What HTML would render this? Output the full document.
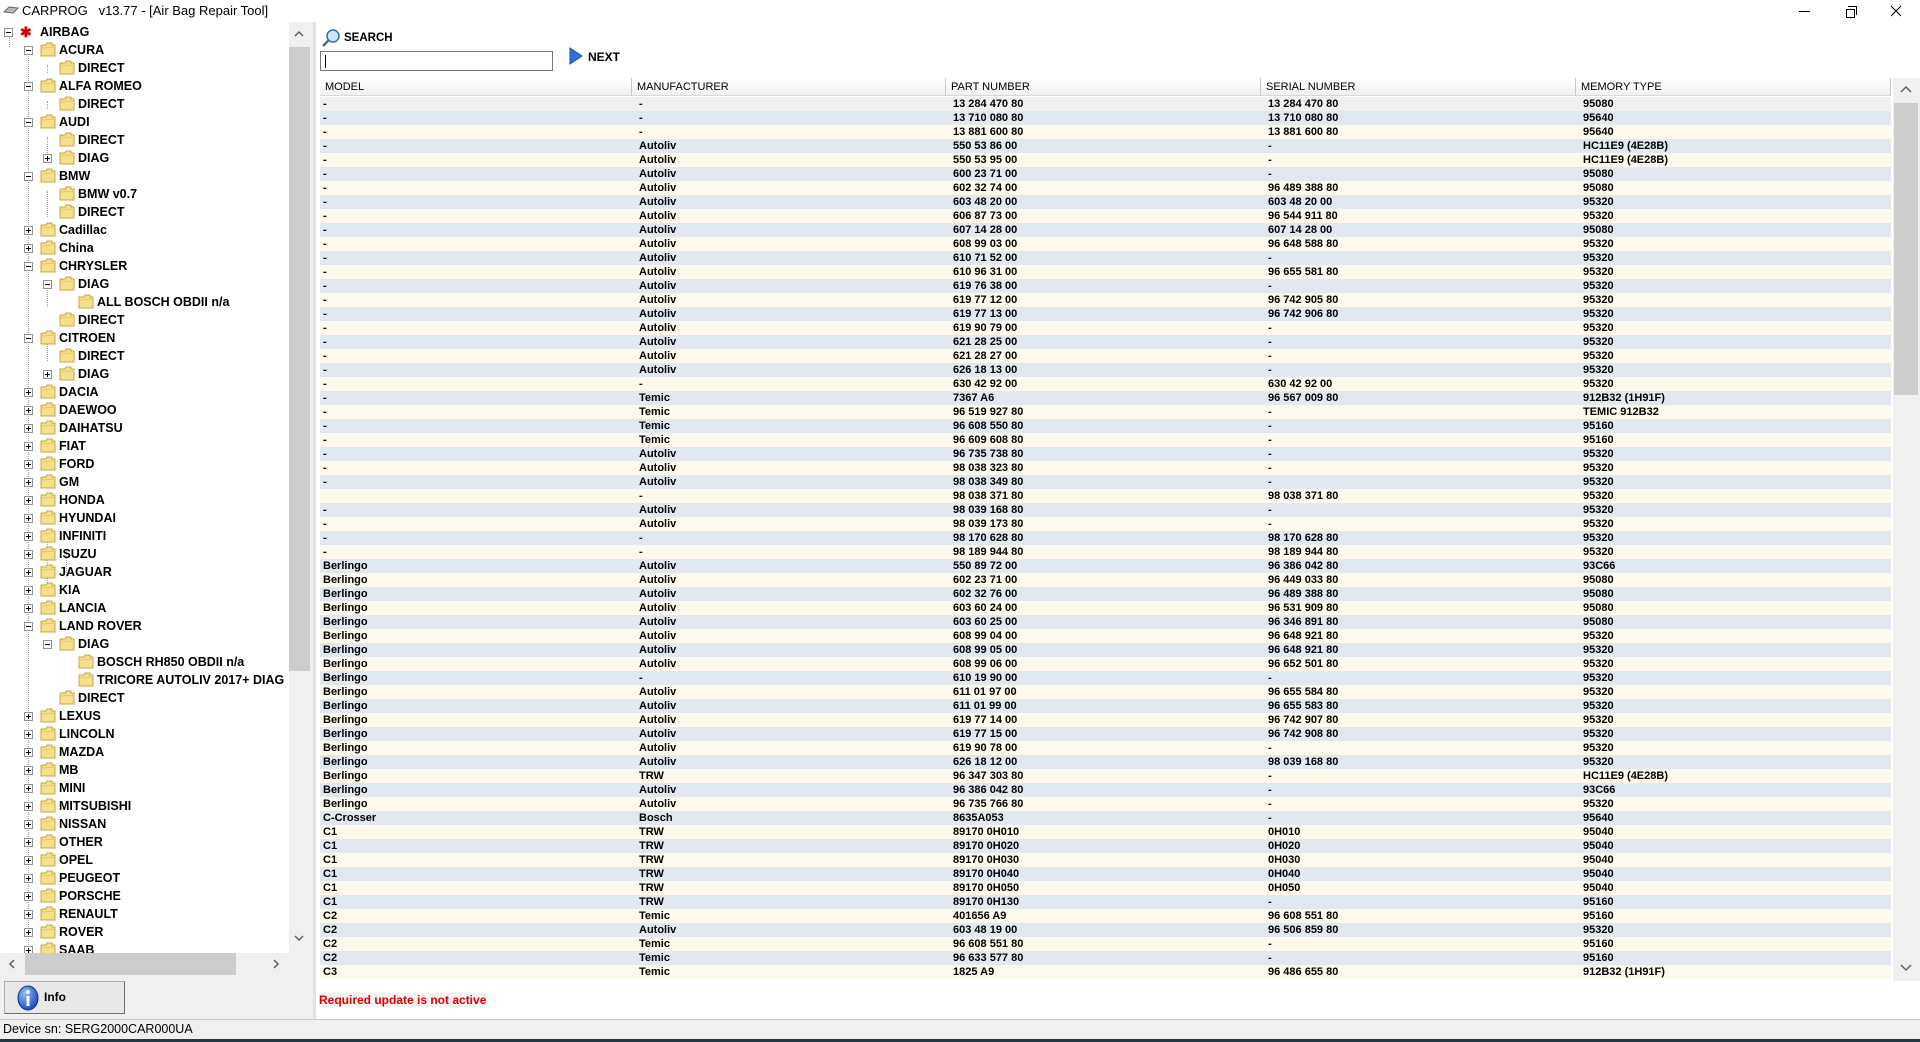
<!DOCTYPE html>
<html><head><meta charset="utf-8"><style>
*{margin:0;padding:0;box-sizing:border-box}
body{width:1920px;height:1042px;overflow:hidden;background:#f0f0f0;font-family:"Liberation Sans",Tahoma,sans-serif;position:relative;color:#000}
.abs{position:absolute}
#title{left:0;top:0;width:1920px;height:22px;background:#fff;font-size:13px}
#tree{left:0;top:22px;width:289px;height:931px;background:#fff;overflow:hidden}
.tr{position:absolute;height:18px;line-height:18px;font-weight:bold;font-size:12.5px;white-space:nowrap}
.bx{position:absolute;width:9px;height:9px;border:1px solid #919191;background:#fff;top:5px}
.bx:before{content:"";position:absolute;left:1px;top:3px;width:5px;height:1px;background:#000}
.bx.p:after{content:"";position:absolute;left:3px;top:1px;width:1px;height:5px;background:#000}
.fd{position:absolute;top:1px;width:16px;height:15px}
.vl{position:absolute;border-left:1px dotted #a0a0a0}
.hl{position:absolute;border-top:1px dotted #a0a0a0;height:0}
#right{left:316px;top:22px;width:1604px;height:997px;background:#fff}
table{border-collapse:collapse;table-layout:fixed;position:absolute;left:320px;top:97px;width:1571px;font-size:11px;font-weight:bold}
td{height:14px;line-height:14px;padding:0 0 0 7px;white-space:nowrap;overflow:hidden}
td:first-child{padding-left:3px}
tr:nth-child(odd) td{background:#fdf9ed}
tr:nth-child(even) td{background:#e1e8f0}
tr.s td{background:#f0f0f0}
#hdr{left:320px;top:78px;width:1571px;height:18px;display:flex;font-size:11px}
#hdr div{height:18px;line-height:18px;padding-left:5px;background:linear-gradient(#fff,#f1f1f1);border-right:1px solid #c8c8c8;border-bottom:1px solid #d8d8d8}
</style></head><body>
<div id="title" class="abs">
<svg class="abs" style="left:3px;top:5px" width="16" height="10"><path d="M1 7 L6 2 L15 3 L10 8 Z" fill="#b8b8b8" stroke="#666" stroke-width="1"/></svg>
<span class="abs" style="left:22px;top:3px">CARPROG&nbsp;&nbsp; v13.77 - [Air Bag Repair Tool]</span>
<div class="abs" style="left:1799px;top:11px;width:11px;height:1px;background:#000"></div>
<div class="abs" style="left:1846px;top:9px;width:9px;height:9px;border:1px solid #000"></div>
<div class="abs" style="left:1848px;top:6px;width:9px;height:9px;border-top:1px solid #000;border-right:1px solid #000"></div>
<svg class="abs" style="left:1890px;top:5px" width="12" height="12"><path d="M1 1L11 11M11 1L1 11" stroke="#000" stroke-width="1"/></svg>
</div>

<div id="tree" class="abs">
<svg width="0" height="0" style="position:absolute"><defs><g id="f"><path d="M1 3 L6 3 L7 1 L12 1 L12 3 L15 3 L15 14 L1 14 Z" fill="#f7e08c" stroke="#c9a444"/><path d="M1 6 L15 5" stroke="#e8c860"/></g></defs></svg>
<div class="vl" style="left:9px;top:15px;height:10px"></div>
<div class="vl" style="left:28px;top:25px;height:900px"></div>
<div class="vl" style="left:47px;top:43px;height:8px"></div>
<div class="vl" style="left:47px;top:79px;height:8px"></div>
<div class="vl" style="left:47px;top:115px;height:26px"></div>
<div class="vl" style="left:47px;top:169px;height:26px"></div>
<div class="vl" style="left:47px;top:259px;height:26px"></div>
<div class="vl" style="left:66px;top:241px;height:8px"></div>
<div class="vl" style="left:47px;top:313px;height:26px"></div>
<div class="vl" style="left:47px;top:511px;height:62px"></div>
<div class="vl" style="left:66px;top:529px;height:26px"></div>
<div class="tr" style="top:1px;left:0;width:289px"><div class="bx" style="left:4px"></div><span style="position:absolute;left:20px;top:0;color:#c00;font-size:14px">✱</span><span style="position:absolute;left:40px">AIRBAG</span></div>
<!-- rows -->
<div class="tr" style="top:19px"><div class="bx" style="left:24px"></div><svg class="fd" style="left:40px"><use href="#f"/></svg><span style="position:absolute;left:59px">ACURA</span></div>
<div class="tr" style="top:37px"><svg class="fd" style="left:59px"><use href="#f"/></svg><span style="position:absolute;left:78px">DIRECT</span></div>
<div class="tr" style="top:55px"><div class="bx" style="left:24px"></div><svg class="fd" style="left:40px"><use href="#f"/></svg><span style="position:absolute;left:59px">ALFA ROMEO</span></div>
<div class="tr" style="top:73px"><svg class="fd" style="left:59px"><use href="#f"/></svg><span style="position:absolute;left:78px">DIRECT</span></div>
<div class="tr" style="top:91px"><div class="bx" style="left:24px"></div><svg class="fd" style="left:40px"><use href="#f"/></svg><span style="position:absolute;left:59px">AUDI</span></div>
<div class="tr" style="top:109px"><svg class="fd" style="left:59px"><use href="#f"/></svg><span style="position:absolute;left:78px">DIRECT</span></div>
<div class="tr" style="top:127px"><div class="bx p" style="left:43px"></div><svg class="fd" style="left:59px"><use href="#f"/></svg><span style="position:absolute;left:78px">DIAG</span></div>
<div class="tr" style="top:145px"><div class="bx" style="left:24px"></div><svg class="fd" style="left:40px"><use href="#f"/></svg><span style="position:absolute;left:59px">BMW</span></div>
<div class="tr" style="top:163px"><svg class="fd" style="left:59px"><use href="#f"/></svg><span style="position:absolute;left:78px">BMW v0.7</span></div>
<div class="tr" style="top:181px"><svg class="fd" style="left:59px"><use href="#f"/></svg><span style="position:absolute;left:78px">DIRECT</span></div>
<div class="tr" style="top:199px"><div class="bx p" style="left:24px"></div><svg class="fd" style="left:40px"><use href="#f"/></svg><span style="position:absolute;left:59px">Cadillac</span></div>
<div class="tr" style="top:217px"><div class="bx p" style="left:24px"></div><svg class="fd" style="left:40px"><use href="#f"/></svg><span style="position:absolute;left:59px">China</span></div>
<div class="tr" style="top:235px"><div class="bx" style="left:24px"></div><svg class="fd" style="left:40px"><use href="#f"/></svg><span style="position:absolute;left:59px">CHRYSLER</span></div>
<div class="tr" style="top:253px"><div class="bx" style="left:43px"></div><svg class="fd" style="left:59px"><use href="#f"/></svg><span style="position:absolute;left:78px">DIAG</span></div>
<div class="tr" style="top:271px"><svg class="fd" style="left:78px"><use href="#f"/></svg><span style="position:absolute;left:97px">ALL BOSCH OBDII n/a</span></div>
<div class="tr" style="top:289px"><svg class="fd" style="left:59px"><use href="#f"/></svg><span style="position:absolute;left:78px">DIRECT</span></div>
<div class="tr" style="top:307px"><div class="bx" style="left:24px"></div><svg class="fd" style="left:40px"><use href="#f"/></svg><span style="position:absolute;left:59px">CITROEN</span></div>
<div class="tr" style="top:325px"><svg class="fd" style="left:59px"><use href="#f"/></svg><span style="position:absolute;left:78px">DIRECT</span></div>
<div class="tr" style="top:343px"><div class="bx p" style="left:43px"></div><svg class="fd" style="left:59px"><use href="#f"/></svg><span style="position:absolute;left:78px">DIAG</span></div>
<div class="tr" style="top:361px"><div class="bx p" style="left:24px"></div><svg class="fd" style="left:40px"><use href="#f"/></svg><span style="position:absolute;left:59px">DACIA</span></div>
<div class="tr" style="top:379px"><div class="bx p" style="left:24px"></div><svg class="fd" style="left:40px"><use href="#f"/></svg><span style="position:absolute;left:59px">DAEWOO</span></div>
<div class="tr" style="top:397px"><div class="bx p" style="left:24px"></div><svg class="fd" style="left:40px"><use href="#f"/></svg><span style="position:absolute;left:59px">DAIHATSU</span></div>
<div class="tr" style="top:415px"><div class="bx p" style="left:24px"></div><svg class="fd" style="left:40px"><use href="#f"/></svg><span style="position:absolute;left:59px">FIAT</span></div>
<div class="tr" style="top:433px"><div class="bx p" style="left:24px"></div><svg class="fd" style="left:40px"><use href="#f"/></svg><span style="position:absolute;left:59px">FORD</span></div>
<div class="tr" style="top:451px"><div class="bx p" style="left:24px"></div><svg class="fd" style="left:40px"><use href="#f"/></svg><span style="position:absolute;left:59px">GM</span></div>
<div class="tr" style="top:469px"><div class="bx p" style="left:24px"></div><svg class="fd" style="left:40px"><use href="#f"/></svg><span style="position:absolute;left:59px">HONDA</span></div>
<div class="tr" style="top:487px"><div class="bx p" style="left:24px"></div><svg class="fd" style="left:40px"><use href="#f"/></svg><span style="position:absolute;left:59px">HYUNDAI</span></div>
<div class="tr" style="top:505px"><div class="bx p" style="left:24px"></div><svg class="fd" style="left:40px"><use href="#f"/></svg><span style="position:absolute;left:59px">INFINITI</span></div>
<div class="tr" style="top:523px"><div class="bx p" style="left:24px"></div><svg class="fd" style="left:40px"><use href="#f"/></svg><span style="position:absolute;left:59px">ISUZU</span></div>
<div class="tr" style="top:541px"><div class="bx p" style="left:24px"></div><svg class="fd" style="left:40px"><use href="#f"/></svg><span style="position:absolute;left:59px">JAGUAR</span></div>
<div class="tr" style="top:559px"><div class="bx p" style="left:24px"></div><svg class="fd" style="left:40px"><use href="#f"/></svg><span style="position:absolute;left:59px">KIA</span></div>
<div class="tr" style="top:577px"><div class="bx p" style="left:24px"></div><svg class="fd" style="left:40px"><use href="#f"/></svg><span style="position:absolute;left:59px">LANCIA</span></div>
<div class="tr" style="top:595px"><div class="bx" style="left:24px"></div><svg class="fd" style="left:40px"><use href="#f"/></svg><span style="position:absolute;left:59px">LAND ROVER</span></div>
<div class="tr" style="top:613px"><div class="bx" style="left:43px"></div><svg class="fd" style="left:59px"><use href="#f"/></svg><span style="position:absolute;left:78px">DIAG</span></div>
<div class="tr" style="top:631px"><svg class="fd" style="left:78px"><use href="#f"/></svg><span style="position:absolute;left:97px">BOSCH RH850 OBDII n/a</span></div>
<div class="tr" style="top:649px"><svg class="fd" style="left:78px"><use href="#f"/></svg><span style="position:absolute;left:97px">TRICORE AUTOLIV 2017+ DIAG</span></div>
<div class="tr" style="top:667px"><svg class="fd" style="left:59px"><use href="#f"/></svg><span style="position:absolute;left:78px">DIRECT</span></div>
<div class="tr" style="top:685px"><div class="bx p" style="left:24px"></div><svg class="fd" style="left:40px"><use href="#f"/></svg><span style="position:absolute;left:59px">LEXUS</span></div>
<div class="tr" style="top:703px"><div class="bx p" style="left:24px"></div><svg class="fd" style="left:40px"><use href="#f"/></svg><span style="position:absolute;left:59px">LINCOLN</span></div>
<div class="tr" style="top:721px"><div class="bx p" style="left:24px"></div><svg class="fd" style="left:40px"><use href="#f"/></svg><span style="position:absolute;left:59px">MAZDA</span></div>
<div class="tr" style="top:739px"><div class="bx p" style="left:24px"></div><svg class="fd" style="left:40px"><use href="#f"/></svg><span style="position:absolute;left:59px">MB</span></div>
<div class="tr" style="top:757px"><div class="bx p" style="left:24px"></div><svg class="fd" style="left:40px"><use href="#f"/></svg><span style="position:absolute;left:59px">MINI</span></div>
<div class="tr" style="top:775px"><div class="bx p" style="left:24px"></div><svg class="fd" style="left:40px"><use href="#f"/></svg><span style="position:absolute;left:59px">MITSUBISHI</span></div>
<div class="tr" style="top:793px"><div class="bx p" style="left:24px"></div><svg class="fd" style="left:40px"><use href="#f"/></svg><span style="position:absolute;left:59px">NISSAN</span></div>
<div class="tr" style="top:811px"><div class="bx p" style="left:24px"></div><svg class="fd" style="left:40px"><use href="#f"/></svg><span style="position:absolute;left:59px">OTHER</span></div>
<div class="tr" style="top:829px"><div class="bx p" style="left:24px"></div><svg class="fd" style="left:40px"><use href="#f"/></svg><span style="position:absolute;left:59px">OPEL</span></div>
<div class="tr" style="top:847px"><div class="bx p" style="left:24px"></div><svg class="fd" style="left:40px"><use href="#f"/></svg><span style="position:absolute;left:59px">PEUGEOT</span></div>
<div class="tr" style="top:865px"><div class="bx p" style="left:24px"></div><svg class="fd" style="left:40px"><use href="#f"/></svg><span style="position:absolute;left:59px">PORSCHE</span></div>
<div class="tr" style="top:883px"><div class="bx p" style="left:24px"></div><svg class="fd" style="left:40px"><use href="#f"/></svg><span style="position:absolute;left:59px">RENAULT</span></div>
<div class="tr" style="top:901px"><div class="bx p" style="left:24px"></div><svg class="fd" style="left:40px"><use href="#f"/></svg><span style="position:absolute;left:59px">ROVER</span></div>
<div class="tr" style="top:919px"><div class="bx p" style="left:24px"></div><svg class="fd" style="left:40px"><use href="#f"/></svg><span style="position:absolute;left:59px">SAAB</span></div>
</div>
<!-- tree vscroll -->
<div class="abs" style="left:289px;top:22px;width:21px;height:931px;background:#f0f0f0"></div>
<div class="abs" style="left:289px;top:47px;width:21px;height:624px;background:#cdcdcd"></div>
<svg class="abs" style="left:294px;top:30px" width="10" height="8"><path d="M1 6L5 2L9 6" fill="none" stroke="#606060" stroke-width="1.5"/></svg>
<svg class="abs" style="left:294px;top:934px" width="10" height="8"><path d="M1 2L5 6L9 2" fill="none" stroke="#606060" stroke-width="1.5"/></svg>
<!-- tree hscroll -->
<div class="abs" style="left:0;top:953px;width:289px;height:22px;background:#f0f0f0"></div>
<div class="abs" style="left:25px;top:953px;width:211px;height:22px;background:#cdcdcd"></div>
<svg class="abs" style="left:8px;top:959px" width="8" height="10"><path d="M6 1L2 5L6 9" fill="none" stroke="#606060" stroke-width="1.5"/></svg>
<svg class="abs" style="left:272px;top:959px" width="8" height="10"><path d="M2 1L6 5L2 9" fill="none" stroke="#606060" stroke-width="1.5"/></svg>
<!-- info button -->
<div class="abs" style="left:4px;top:981px;width:121px;height:33px;background:#e8e8e8;border:1px solid #adadad;border-right-color:#707070;border-bottom-color:#707070"></div>
<svg class="abs" style="left:16px;top:985px" width="26" height="26"><defs><radialGradient id="g" cx="0.35" cy="0.3" r="0.8"><stop offset="0" stop-color="#8fc0ff"/><stop offset="1" stop-color="#1040b0"/></radialGradient></defs><ellipse cx="12" cy="13" rx="10" ry="12" fill="url(#g)" stroke="#103090"/><circle cx="12" cy="7" r="2" fill="#fff"/><rect x="10.5" y="11" width="3" height="10" fill="#fff"/></svg>
<div class="abs" style="left:44px;top:990px;font-size:12px;font-weight:bold">Info</div>
<!-- divider -->
<div class="abs" style="left:313px;top:22px;width:3px;height:997px;background:#e3e3e3"></div>
<div id="right" class="abs"></div>
<svg class="abs" style="left:321px;top:28px" width="20" height="20"><circle cx="12" cy="8" r="6" fill="#cde4fb" stroke="#3a6aa8" stroke-width="1.5"/><path d="M8 12L2 18" stroke="#3a6aa8" stroke-width="2.5"/></svg>
<div class="abs" style="left:344px;top:32px;font-size:11.5px;font-weight:bold">SEARCH</div>
<div class="abs" style="left:320px;top:51px;width:233px;height:20px;border:1px solid #7a7a7a;background:#fff"><div style="position:absolute;left:4px;top:3px;width:1px;height:13px;background:#000"></div></div>
<svg class="abs" style="left:569px;top:47px" width="14" height="18"><path d="M1 1L13 9L1 17Z" fill="#2f6fd6" stroke="#1a4fa8"/></svg>
<div class="abs" style="left:588px;top:50px;font-size:12px;font-weight:bold">NEXT</div>
<div id="hdr" class="abs"><div style="width:312px">MODEL</div><div style="width:314px">MANUFACTURER</div><div style="width:315px">PART NUMBER</div><div style="width:315px">SERIAL NUMBER</div><div style="width:315px">MEMORY TYPE</div></div>
<table>
<colgroup><col style="width:312px"><col style="width:314px"><col style="width:315px"><col style="width:315px"><col style="width:315px"></colgroup>
<tr class="s"><td>-</td><td>-</td><td>13 284 470 80</td><td>13 284 470 80</td><td>95080</td></tr>
<tr><td>-</td><td>-</td><td>13 710 080 80</td><td>13 710 080 80</td><td>95640</td></tr>
<tr><td>-</td><td>-</td><td>13 881 600 80</td><td>13 881 600 80</td><td>95640</td></tr>
<tr><td>-</td><td>Autoliv</td><td>550 53 86 00</td><td>-</td><td>HC11E9 (4E28B)</td></tr>
<tr><td>-</td><td>Autoliv</td><td>550 53 95 00</td><td>-</td><td>HC11E9 (4E28B)</td></tr>
<tr><td>-</td><td>Autoliv</td><td>600 23 71 00</td><td>-</td><td>95080</td></tr>
<tr><td>-</td><td>Autoliv</td><td>602 32 74 00</td><td>96 489 388 80</td><td>95080</td></tr>
<tr><td>-</td><td>Autoliv</td><td>603 48 20 00</td><td>603 48 20 00</td><td>95320</td></tr>
<tr><td>-</td><td>Autoliv</td><td>606 87 73 00</td><td>96 544 911 80</td><td>95320</td></tr>
<tr><td>-</td><td>Autoliv</td><td>607 14 28 00</td><td>607 14 28 00</td><td>95080</td></tr>
<tr><td>-</td><td>Autoliv</td><td>608 99 03 00</td><td>96 648 588 80</td><td>95320</td></tr>
<tr><td>-</td><td>Autoliv</td><td>610 71 52 00</td><td>-</td><td>95320</td></tr>
<tr><td>-</td><td>Autoliv</td><td>610 96 31 00</td><td>96 655 581 80</td><td>95320</td></tr>
<tr><td>-</td><td>Autoliv</td><td>619 76 38 00</td><td>-</td><td>95320</td></tr>
<tr><td>-</td><td>Autoliv</td><td>619 77 12 00</td><td>96 742 905 80</td><td>95320</td></tr>
<tr><td>-</td><td>Autoliv</td><td>619 77 13 00</td><td>96 742 906 80</td><td>95320</td></tr>
<tr><td>-</td><td>Autoliv</td><td>619 90 79 00</td><td>-</td><td>95320</td></tr>
<tr><td>-</td><td>Autoliv</td><td>621 28 25 00</td><td>-</td><td>95320</td></tr>
<tr><td>-</td><td>Autoliv</td><td>621 28 27 00</td><td>-</td><td>95320</td></tr>
<tr><td>-</td><td>Autoliv</td><td>626 18 13 00</td><td>-</td><td>95320</td></tr>
<tr><td>-</td><td>-</td><td>630 42 92 00</td><td>630 42 92 00</td><td>95320</td></tr>
<tr><td>-</td><td>Temic</td><td>7367 A6</td><td>96 567 009 80</td><td>912B32 (1H91F)</td></tr>
<tr><td>-</td><td>Temic</td><td>96 519 927 80</td><td>-</td><td>TEMIC 912B32</td></tr>
<tr><td>-</td><td>Temic</td><td>96 608 550 80</td><td>-</td><td>95160</td></tr>
<tr><td>-</td><td>Temic</td><td>96 609 608 80</td><td>-</td><td>95160</td></tr>
<tr><td>-</td><td>Autoliv</td><td>96 735 738 80</td><td>-</td><td>95320</td></tr>
<tr><td>-</td><td>Autoliv</td><td>98 038 323 80</td><td>-</td><td>95320</td></tr>
<tr><td>-</td><td>Autoliv</td><td>98 038 349 80</td><td>-</td><td>95320</td></tr>
<tr><td></td><td>-</td><td>98 038 371 80</td><td>98 038 371 80</td><td>95320</td></tr>
<tr><td>-</td><td>Autoliv</td><td>98 039 168 80</td><td>-</td><td>95320</td></tr>
<tr><td>-</td><td>Autoliv</td><td>98 039 173 80</td><td>-</td><td>95320</td></tr>
<tr><td>-</td><td>-</td><td>98 170 628 80</td><td>98 170 628 80</td><td>95320</td></tr>
<tr><td>-</td><td>-</td><td>98 189 944 80</td><td>98 189 944 80</td><td>95320</td></tr>
<tr><td>Berlingo</td><td>Autoliv</td><td>550 89 72 00</td><td>96 386 042 80</td><td>93C66</td></tr>
<tr><td>Berlingo</td><td>Autoliv</td><td>602 23 71 00</td><td>96 449 033 80</td><td>95080</td></tr>
<tr><td>Berlingo</td><td>Autoliv</td><td>602 32 76 00</td><td>96 489 388 80</td><td>95080</td></tr>
<tr><td>Berlingo</td><td>Autoliv</td><td>603 60 24 00</td><td>96 531 909 80</td><td>95080</td></tr>
<tr><td>Berlingo</td><td>Autoliv</td><td>603 60 25 00</td><td>96 346 891 80</td><td>95080</td></tr>
<tr><td>Berlingo</td><td>Autoliv</td><td>608 99 04 00</td><td>96 648 921 80</td><td>95320</td></tr>
<tr><td>Berlingo</td><td>Autoliv</td><td>608 99 05 00</td><td>96 648 921 80</td><td>95320</td></tr>
<tr><td>Berlingo</td><td>Autoliv</td><td>608 99 06 00</td><td>96 652 501 80</td><td>95320</td></tr>
<tr><td>Berlingo</td><td>-</td><td>610 19 90 00</td><td>-</td><td>95320</td></tr>
<tr><td>Berlingo</td><td>Autoliv</td><td>611 01 97 00</td><td>96 655 584 80</td><td>95320</td></tr>
<tr><td>Berlingo</td><td>Autoliv</td><td>611 01 99 00</td><td>96 655 583 80</td><td>95320</td></tr>
<tr><td>Berlingo</td><td>Autoliv</td><td>619 77 14 00</td><td>96 742 907 80</td><td>95320</td></tr>
<tr><td>Berlingo</td><td>Autoliv</td><td>619 77 15 00</td><td>96 742 908 80</td><td>95320</td></tr>
<tr><td>Berlingo</td><td>Autoliv</td><td>619 90 78 00</td><td>-</td><td>95320</td></tr>
<tr><td>Berlingo</td><td>Autoliv</td><td>626 18 12 00</td><td>98 039 168 80</td><td>95320</td></tr>
<tr><td>Berlingo</td><td>TRW</td><td>96 347 303 80</td><td>-</td><td>HC11E9 (4E28B)</td></tr>
<tr><td>Berlingo</td><td>Autoliv</td><td>96 386 042 80</td><td>-</td><td>93C66</td></tr>
<tr><td>Berlingo</td><td>Autoliv</td><td>96 735 766 80</td><td>-</td><td>95320</td></tr>
<tr><td>C-Crosser</td><td>Bosch</td><td>8635A053</td><td>-</td><td>95640</td></tr>
<tr><td>C1</td><td>TRW</td><td>89170 0H010</td><td>0H010</td><td>95040</td></tr>
<tr><td>C1</td><td>TRW</td><td>89170 0H020</td><td>0H020</td><td>95040</td></tr>
<tr><td>C1</td><td>TRW</td><td>89170 0H030</td><td>0H030</td><td>95040</td></tr>
<tr><td>C1</td><td>TRW</td><td>89170 0H040</td><td>0H040</td><td>95040</td></tr>
<tr><td>C1</td><td>TRW</td><td>89170 0H050</td><td>0H050</td><td>95040</td></tr>
<tr><td>C1</td><td>TRW</td><td>89170 0H130</td><td>-</td><td>95160</td></tr>
<tr><td>C2</td><td>Temic</td><td>401656 A9</td><td>96 608 551 80</td><td>95160</td></tr>
<tr><td>C2</td><td>Autoliv</td><td>603 48 19 00</td><td>96 506 859 80</td><td>95320</td></tr>
<tr><td>C2</td><td>Temic</td><td>96 608 551 80</td><td>-</td><td>95160</td></tr>
<tr><td>C2</td><td>Temic</td><td>96 633 577 80</td><td>-</td><td>95160</td></tr>
<tr><td>C3</td><td>Temic</td><td>1825 A9</td><td>96 486 655 80</td><td>912B32 (1H91F)</td></tr>
</table>
<!-- table vscroll -->
<div class="abs" style="left:1893px;top:78px;width:27px;height:903px;background:#f0f0f0"></div>
<div class="abs" style="left:1894px;top:103px;width:24px;height:292px;background:#cdcdcd"></div>
<svg class="abs" style="left:1900px;top:86px" width="12" height="8"><path d="M1 6L6 1L11 6" fill="none" stroke="#606060" stroke-width="1.5"/></svg>
<svg class="abs" style="left:1900px;top:964px" width="12" height="8"><path d="M1 1L6 6L11 1" fill="none" stroke="#606060" stroke-width="1.5"/></svg>
<div class="abs" style="left:319px;top:993px;font-size:12px;font-weight:bold;color:#e00000;background:#f3f3f3">Required update is not active</div>
<!-- status -->
<div class="abs" style="left:0;top:1019px;width:1920px;height:20px;background:#f0f0f0;border-top:1px solid #c8c8c8;font-size:12.5px;line-height:19px;padding-left:3px">Device sn: SERG2000CAR000UA</div>
<div class="abs" style="left:0;top:1039px;width:1920px;height:3px;background:#223a40"></div>
</body></html>
